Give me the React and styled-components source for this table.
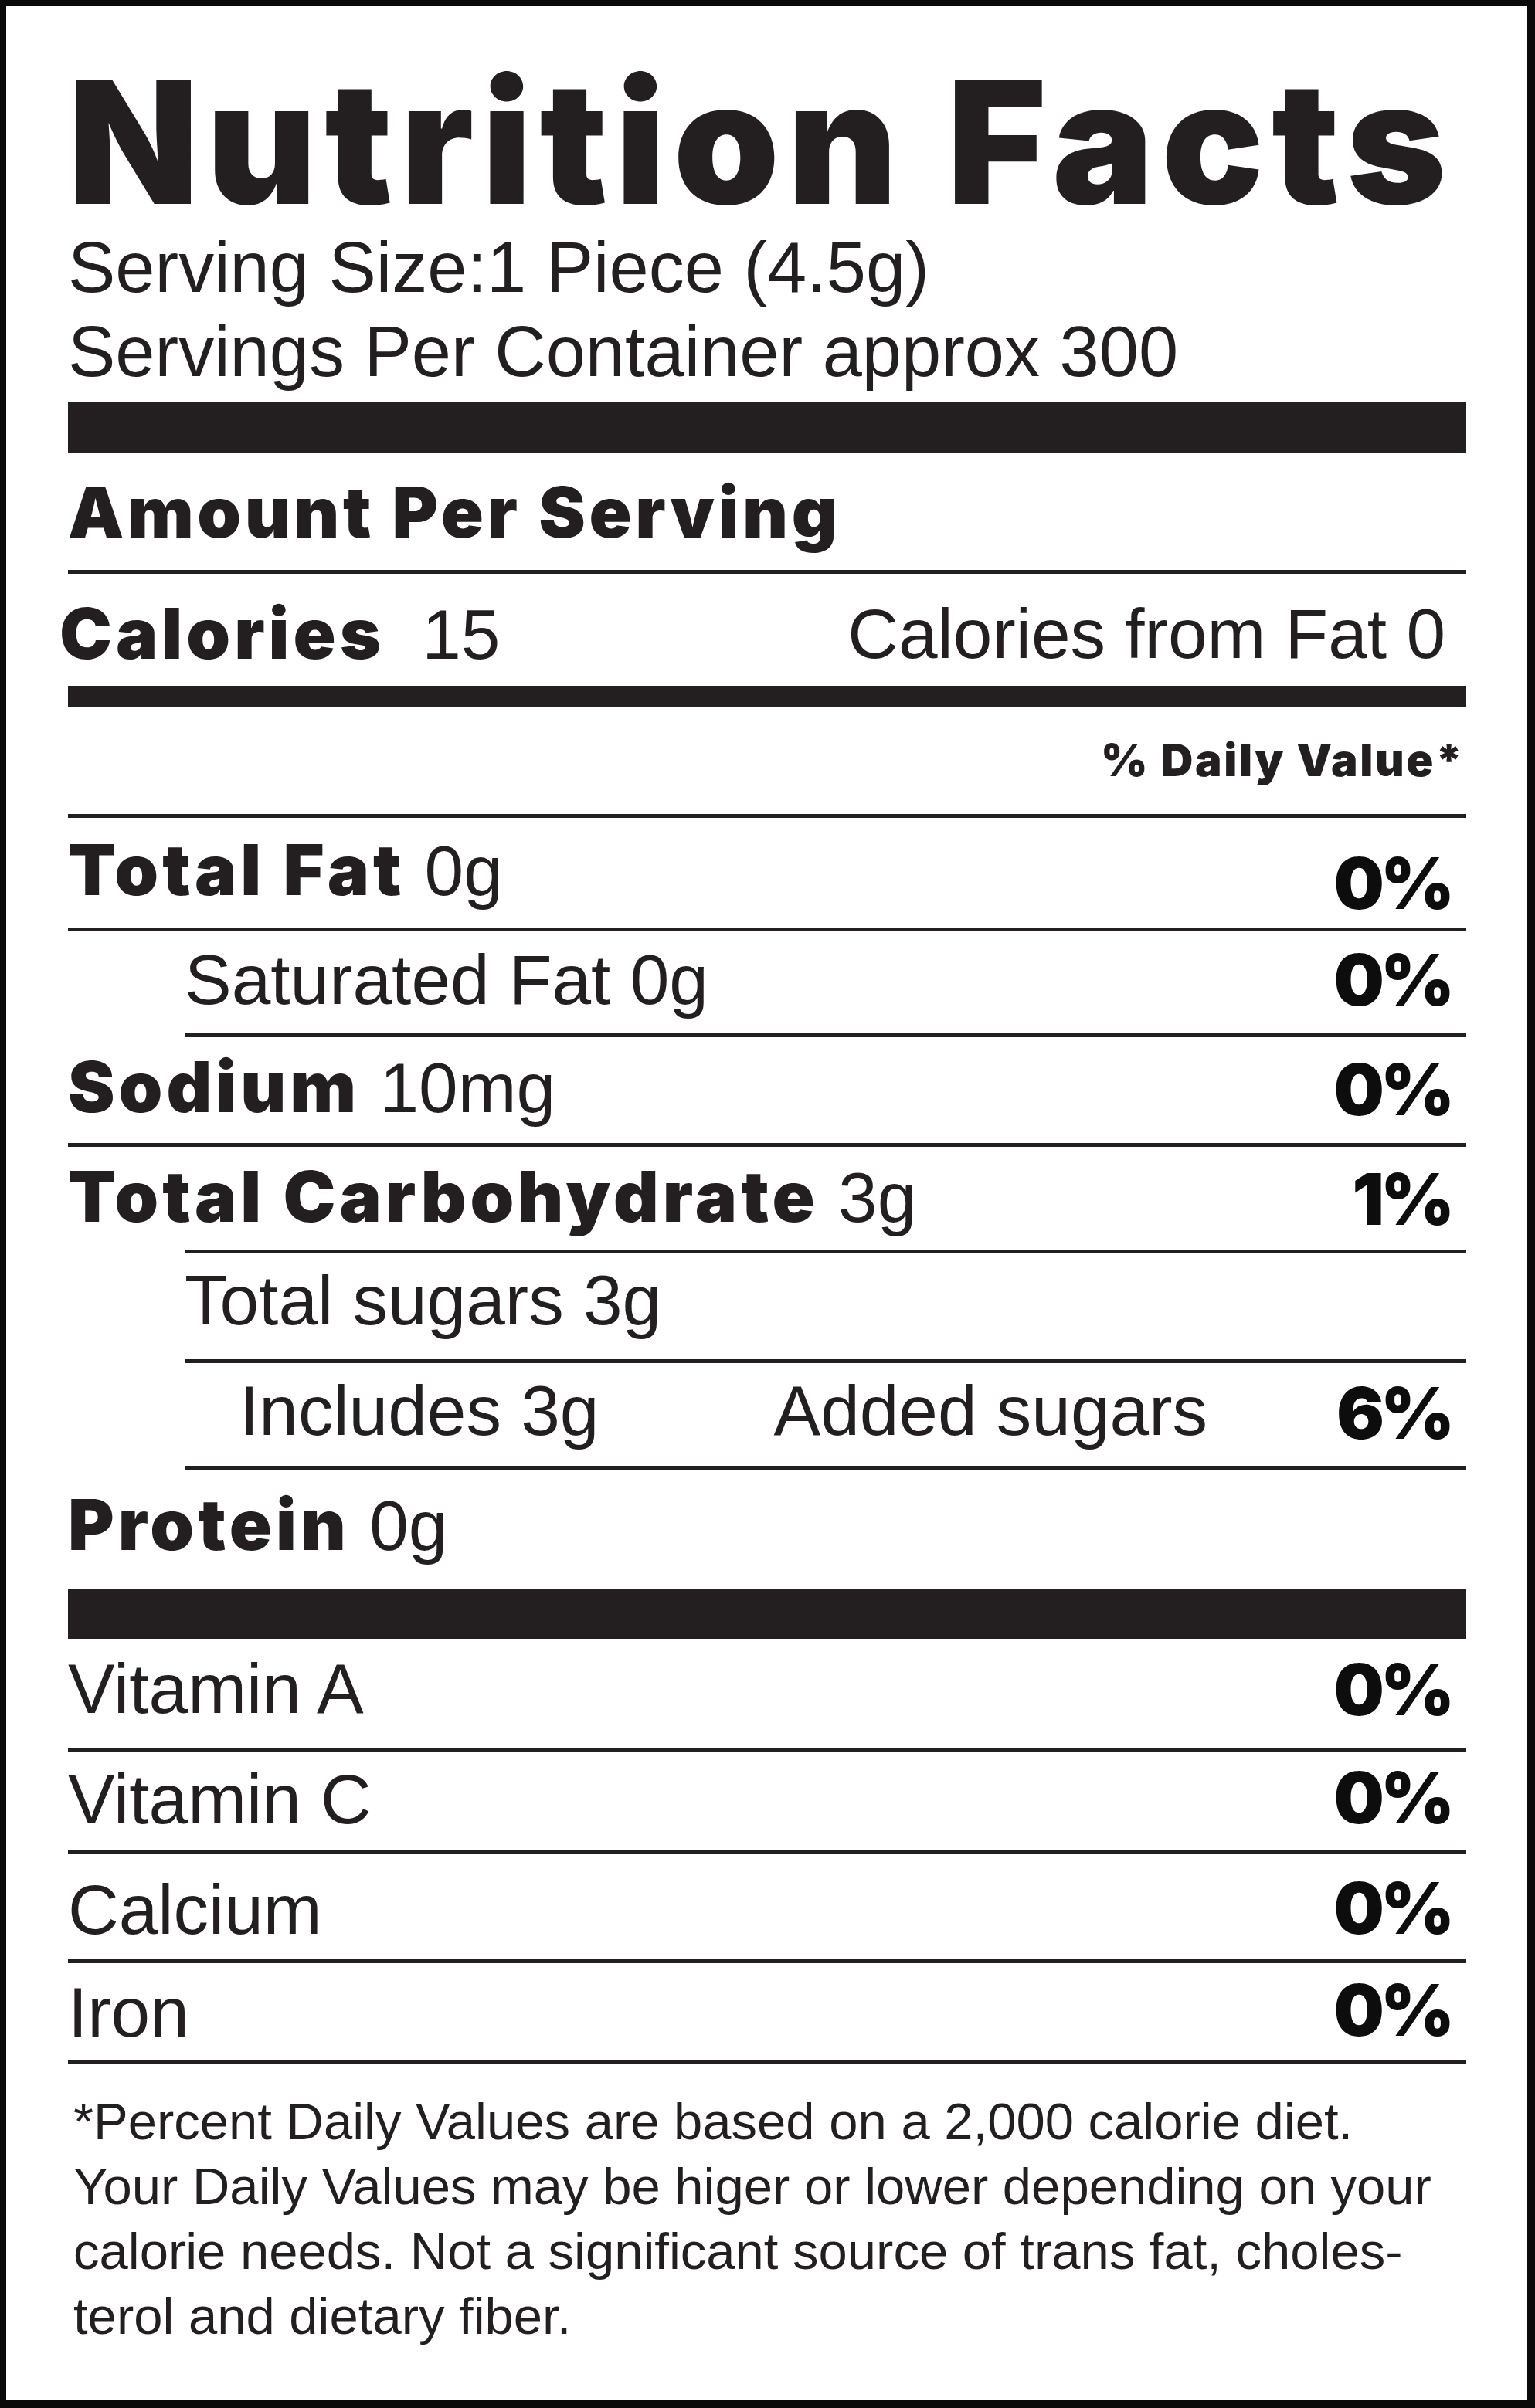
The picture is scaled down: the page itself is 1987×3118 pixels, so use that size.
import React from "react";
import styled, { createGlobalStyle } from "styled-components";

const INK = "#231f20";
const DARK = "#0d0d0d";
const HEAVY = `"Inter", "Liberation Sans", Arial, sans-serif`;

const GlobalStyle = createGlobalStyle`
  html, body {
    margin: 0;
    padding: 0;
    background: #fff;
  }
  body {
    font-family: "Liberation Sans", Arial, Helvetica, sans-serif;
    color: ${INK};
  }
`;

const Panel = styled.div`
  box-sizing: border-box;
  width: 1987px;
  height: 3118px;
  border: solid #0a0a0a;
  border-width: 8px 10px 10px 8px;
  padding: 0 79px 0 80px;
  background: #fff;
  display: flex;
  flex-direction: column;
  overflow: hidden;
`;

const Title = styled.h1`
  margin: 76px 0 0 0;
  font-family: ${HEAVY};
  font-size: 220px;
  font-weight: 900;
  line-height: 200px;
  letter-spacing: 10px;
  white-space: nowrap;
`;

const ServingInfo = styled.div`
  margin-top: 8px;
  font-size: 92px;
  line-height: 109px;
  white-space: nowrap;
`;

const Bar = styled.div`
  flex-shrink: 0;
  height: ${(p) => p.$h}px;
  margin-top: ${(p) => p.$mt || 0}px;
  background: ${INK};
`;

const Rule = styled.div`
  flex-shrink: 0;
  height: 5px;
  margin-left: ${(p) => p.$indent || 0}px;
  background: ${INK};
`;

const Heavy = styled.span`
  font-family: ${HEAVY};
  font-weight: 900;
  font-size: 91px;
  letter-spacing: 0.055em;
`;

const SectionHead = styled.div`
  box-sizing: border-box;
  flex-shrink: 0;
  height: 151px;
  padding-top: 31px;
  font-family: ${HEAVY};
  font-weight: 900;
  font-size: 91px;
  line-height: 1;
  letter-spacing: 0.05em;
  white-space: nowrap;
`;

const DailyHead = styled.div`
  box-sizing: border-box;
  flex-shrink: 0;
  height: 138px;
  padding: 39px 2px 0 0;
  text-align: right;
  font-family: ${HEAVY};
  font-weight: 900;
  font-size: 58px;
  line-height: 1;
  letter-spacing: 0.045em;
  white-space: nowrap;
`;

const Row = styled.div`
  flex-shrink: 0;
  display: flex;
  align-items: flex-start;
  height: ${(p) => p.$h}px;
  padding-left: ${(p) => p.$indent || 0}px;
`;

const Text = styled.div`
  margin-top: ${(p) => p.$base - 77}px;
  font-size: 91px;
  line-height: 1;
  white-space: nowrap;
`;

const CaloriesLabel = styled(Text)`
  margin-left: -11px;
`;

const CalorieCount = styled.span`
  margin-left: 48px;
`;

const FatCalories = styled(Text)`
  margin-left: auto;
  margin-right: 27px;
`;

const AddedSugars = styled(Text)`
  margin-left: 226px;
`;

const Percent = styled.div`
  margin-left: auto;
  margin-right: 20px;
  margin-top: ${(p) => p.$base - 79.5}px;
  font-family: ${HEAVY};
  font-size: 92px;
  font-weight: 900;
  line-height: 1;
  letter-spacing: -5px;
  color: ${DARK};
  white-space: nowrap;
`;

const Footnote = styled.p`
  margin: 32px 0 0 7px;
  font-size: 67px;
  line-height: 84px;
  white-space: nowrap;
`;

const vitamins = [
  { name: "Vitamin A", h: 141, base: 96, pb: 99 },
  { name: "Vitamin C", h: 128, base: 93, pb: 93 },
  { name: "Calcium", h: 136, base: 103, pb: 103 },
  { name: "Iron", h: 126, base: 95, pb: 94.5 },
];

export default function App() {
  return (
    <>
      <GlobalStyle />
      <Panel>
        <Title>Nutrition Facts</Title>
        <ServingInfo>
          Serving Size:1 Piece (4.5g)
          <br />
          Servings Per Container approx 300
        </ServingInfo>
        <Bar $h={66} $mt={11} />
        <SectionHead>Amount Per Serving</SectionHead>
        <Rule />
        <Row $h={145}>
          <CaloriesLabel $base={109}>
            <Heavy>Calories</Heavy>
            <CalorieCount>15</CalorieCount>
          </CaloriesLabel>
          <FatCalories $base={109}>Calories from Fat 0</FatCalories>
        </Row>
        <Bar $h={28} />
        <DailyHead>% Daily Value*</DailyHead>

        <Rule />
        <Row $h={142}>
          <Text $base={99}>
            <Heavy>Total Fat</Heavy> 0g
          </Text>
          <Percent $base={118}>0%</Percent>
        </Row>
        <Rule />
        <Row $h={132} $indent={151}>
          <Text $base={94}>Saturated Fat 0g</Text>
          <Percent $base={96}>0%</Percent>
        </Row>
        <Rule $indent={151} />
        <Row $h={137}>
          <Text $base={96}>
            <Heavy>Sodium</Heavy> 10mg
          </Text>
          <Percent $base={101}>0%</Percent>
        </Row>
        <Rule />
        <Row $h={133}>
          <Text $base={96}>
            <Heavy>Total Carbohydrate</Heavy> 3g
          </Text>
          <Percent $base={101}>1%</Percent>
        </Row>
        <Rule $indent={151} />
        <Row $h={137} $indent={151}>
          <Text $base={92}>Total sugars 3g</Text>
        </Row>
        <Rule $indent={151} />
        <Row $h={133} $indent={222}>
          <Text $base={93}>Includes 3g</Text>
          <AddedSugars $base={93}>Added sugars</AddedSugars>
          <Percent $base={98}>6%</Percent>
        </Row>
        <Rule $indent={151} />
        <Row $h={154}>
          <Text $base={103}>
            <Heavy>Protein</Heavy> 0g
          </Text>
        </Row>
        <Bar $h={65} />

        {vitamins.map((v, i) => (
          <React.Fragment key={v.name}>
            {i > 0 && <Rule />}
            <Row $h={v.h}>
              <Text $base={v.base}>{v.name}</Text>
              <Percent $base={v.pb}>0%</Percent>
            </Row>
          </React.Fragment>
        ))}
        <Rule />

        <Footnote>
          *Percent Daily Values are based on a 2,000 calorie diet.
          <br />
          Your Daily Values may be higer or lower depending on your
          <br />
          calorie needs. Not a significant source of trans fat, choles-
          <br />
          terol and dietary fiber.
        </Footnote>
      </Panel>
    </>
  );
}
